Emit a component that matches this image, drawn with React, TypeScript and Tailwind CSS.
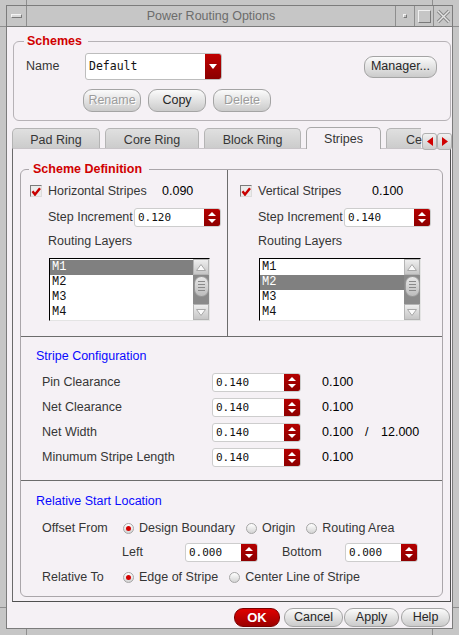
import React from 'react';

const sans = "font-['Liberation_Sans',Arial,sans-serif]";
const spinFont = "font-['DejaVu_Sans_Mono',monospace]";
const listFont = "font-['Liberation_Mono','Courier_New',monospace]";

const SpinArrows = () => (
  <div className="flex w-[16px] flex-col items-center justify-center gap-[3px] rounded-r-[2px] bg-linear-to-b from-[#b40000] to-[#8e0000]">
    <svg width="8" height="4" viewBox="0 0 8 4">
      <path d="M0 4 L4 0 L8 4Z" fill="#fff" />
    </svg>
    <svg width="8" height="4" viewBox="0 0 8 4">
      <path d="M0 0 L4 4 L8 0Z" fill="#fff" />
    </svg>
  </div>
);

const SpinBox = ({ value, width }: { value: string; width: string }) => (
  <div className={`flex h-[19px] ${width} rounded-[3px] border border-[#cdcdcd] bg-white`}>
    <div className={`flex-1 pl-[3px] ${spinFont} text-[11px] leading-[17px] text-[#111]`}>{value}</div>
    <SpinArrows />
  </div>
);

const Check = () => (
  <div className="flex h-[12px] w-[12px] items-center justify-center border border-t-[#7a7a7a] border-l-[#7a7a7a] border-b-[#dcdcdc] border-r-[#dcdcdc] bg-[#ebebeb]">
    <svg width="10" height="9" viewBox="0 0 10 9">
      <path d="M1.5 4.2 L4 7.5 L9 1.2" stroke="#c80000" strokeWidth="2.4" fill="none" />
    </svg>
  </div>
);

const Radio = ({ on }: { on?: boolean }) => (
  <div className="flex h-[11px] w-[11px] shrink-0 items-center justify-center rounded-full border border-[#a6a6a6] bg-linear-to-b from-[#ffffff] to-[#d4d4d4]">
    {on && <div className="h-[5px] w-[5px] rounded-full bg-[#d40000]" />}
  </div>
);

const ScrollBtn = ({ up }: { up?: boolean }) => (
  <div className="flex h-[16px] items-center justify-center border border-[#b4b4b4] bg-linear-to-b from-[#eeeeee] to-[#c6c6c6]">
    <svg width="10" height="7" viewBox="0 0 10 7">
      <path d={up ? 'M0.5 6.5 L5 0.5 L9.5 6.5Z' : 'M0.5 0.5 L5 6.5 L9.5 0.5Z'} fill="#fafafa" stroke="#a8a8a8" strokeWidth="1" />
    </svg>
  </div>
);

const ListBox = ({ sel, width }: { sel: number; width: string }) => (
  <div className={`flex h-[63px] ${width} border border-t-black border-l-black border-r-[#e4e4e4] border-b-[#e4e4e4] bg-white`}>
    <div className={`flex-1 pt-px ${listFont} text-[12px] leading-[15px]`}>
      {['M1', 'M2', 'M3', 'M4'].map((m, i) => (
        <div key={m} className={`h-[15px] pl-[2px] ${i === sel ? 'bg-[#808080] text-white' : 'text-[#111]'}`}>
          {m}
        </div>
      ))}
    </div>
    <div className="flex w-[16px] flex-col bg-[#8a8a8a]">
      <ScrollBtn up />
      <div className="flex h-[22px] items-center justify-center">
        <div className="flex h-[21px] w-[15px] flex-col items-center justify-center gap-[2px] rounded-full border border-[#9a9a9a] bg-linear-to-b from-[#e8e8e8] to-[#bcbcbc]">
          <div className="h-px w-[7px] bg-[#8a8a8a]" />
          <div className="h-px w-[7px] bg-[#8a8a8a]" />
          <div className="h-px w-[7px] bg-[#8a8a8a]" />
          <div className="h-px w-[7px] bg-[#8a8a8a]" />
        </div>
      </div>
      <div className="flex-1" />
      <ScrollBtn />
    </div>
  </div>
);

const GrayBtn = ({ label, width, height, disabled }: { label: string; width: string; height: string; disabled?: boolean }) => (
  <div
    className={`flex ${width} ${height} items-center justify-center rounded-[9px] border border-[#a4a4a4] bg-linear-to-b from-[#fbfbfb] to-[#cbcbcb] ${
      disabled ? 'text-[#9c9c9c] [text-shadow:1px_1px_0_#ffffff]' : 'text-[#262626]'
    }`}
  >
    {label}
  </div>
);

const Tab = ({ label, width, active }: { label: string; width: string; active?: boolean }) =>
  active ? (
    <div className={`relative z-10 -mb-px flex h-[22px] ${width} items-start justify-center rounded-t-[5px] border border-b-0 border-[#a8a8a8] bg-[#f5f1f5] pt-[2px]`}>
      {label}
    </div>
  ) : (
    <div className={`flex h-[20px] ${width} shrink-0 items-start justify-center overflow-hidden whitespace-nowrap rounded-t-[5px] border border-b-0 border-[#b4b4b4] bg-linear-to-b from-[#e0e0e0] to-[#cccccc] pt-[2px]`}>
      {label}
    </div>
  );

const TabArrow = ({ left }: { left?: boolean }) => (
  <div className="flex h-[17px] w-[15px] items-center justify-center rounded-[3px] border border-[#b0b0b0] bg-linear-to-b from-[#f2f2f2] to-[#cdcdcd]">
    <svg width="6" height="9" viewBox="0 0 6 9">
      <path d={left ? 'M6 0 L0 4.5 L6 9Z' : 'M0 0 L6 4.5 L0 9Z'} fill="#d00000" />
    </svg>
  </div>
);

const ConfigRow = ({ label, extra }: { label: string; extra?: boolean }) => (
  <div className="flex h-[19px] items-center">
    <span className="w-[170px]">{label}</span>
    <SpinBox value="0.140" width="w-[89px]" />
    <span className="ml-[21px] w-[43px] text-black">0.100</span>
    {extra && (
      <>
        <span className="w-[16px] text-black">/</span>
        <span className="text-black">12.000</span>
      </>
    )}
  </div>
);

const Opt = ({ label, on, first }: { label: string; on?: boolean; first?: boolean }) => (
  <div className={`flex items-center gap-[5px] ${first ? '' : 'ml-[11px]'}`}>
    <Radio on={on} />
    <span>{label}</span>
  </div>
);

export default function App() {
  return (
    <div className={`flex h-[635px] w-[459px] flex-col bg-[#c6c6c6] ${sans} text-[12.5px] text-[#363636]`}>
      {/* top frame */}
      <div className="flex h-[5px] shrink-0">
        <div className="w-[27px] border-r border-[#8e8e8e]" />
        <div className="flex-1" />
        <div className="w-[27px] border-l border-[#8e8e8e]" />
      </div>

      <div className="flex flex-1">
        <div className="flex w-[6px] flex-col">
          <div className="h-[22px] border-b border-[#8e8e8e]" />
          <div className="flex-1" />
          <div className="h-[22px] border-t border-[#8e8e8e]" />
        </div>

        <div className="flex w-[447px] flex-col border border-[#7c7c7c]">
          {/* title bar */}
          <div className="flex h-[21px] shrink-0 border-b border-[#7c7c7c] bg-[#c6c6c6]">
            <div className="flex w-[20px] items-center justify-center border-r border-[#8e8e8e]">
              <div className="h-[4px] w-[11px] border border-t-[#f4f4f4] border-l-[#f4f4f4] border-b-[#7a7a7a] border-r-[#7a7a7a] bg-[#d8d8d8]" />
            </div>
            <div className="flex-1 text-center leading-[20px] text-[#6c6c6c]">Power Routing Options</div>
            <div className="flex w-[19px] items-center justify-center border-l border-[#8e8e8e]">
              <div className="h-[4px] w-[4px] border border-t-[#f4f4f4] border-l-[#f4f4f4] border-b-[#7a7a7a] border-r-[#7a7a7a]" />
            </div>
            <div className="flex w-[19px] items-center justify-center border-l border-[#8e8e8e]">
              <div className="h-[13px] w-[13px] border border-t-[#f0f0f0] border-l-[#f0f0f0] border-b-[#7a7a7a] border-r-[#7a7a7a]" />
            </div>
            <div className="flex w-[19px] items-center justify-center border-l border-[#8e8e8e]">
              <svg width="15" height="15" viewBox="0 0 15 15">
                <path d="M2 2 L13 13 M13 2 L2 13" stroke="#8a8a8a" strokeWidth="3.4" />
                <path d="M2 2 L13 13 M13 2 L2 13" stroke="#e4e4e4" strokeWidth="1.4" />
              </svg>
            </div>
          </div>

          {/* body */}
          <div className="flex h-[601px] flex-col bg-[#f5f1f5]">
            {/* Schemes */}
            <div className="relative ml-[6px] mr-[1px] mt-[14px] h-[80px] rounded-[6px] border border-[#b6b2b6]">
              <span className="absolute -top-[9px] left-[10px] bg-[#f5f1f5] pl-[3px] pr-[6px] font-bold leading-[16px] text-[#d00000]">
                Schemes
              </span>
              <div className="flex items-center pl-[12px] pr-[13px] pt-[11px]">
                <span className="w-[59px]">Name</span>
                <div className="flex h-[27px] w-[137px] rounded-[3px] border border-[#bdbdbd] bg-white">
                  <div className={`flex-1 pl-[3px] ${spinFont} text-[11.5px] leading-[25px] text-[#111]`}>Default</div>
                  <div className="flex w-[16px] items-center justify-center rounded-r-[2px] bg-linear-to-b from-[#c00000] to-[#8a0000]">
                    <svg width="8" height="5" viewBox="0 0 8 5">
                      <path d="M0 0 L4 5 L8 0Z" fill="#fff" />
                    </svg>
                  </div>
                </div>
                <div className="flex-1" />
                <GrayBtn label="Manager..." width="w-[73px]" height="h-[22px]" />
              </div>
              <div className="ml-[69px] mt-[9px] flex gap-[7px]">
                <GrayBtn label="Rename" width="w-[58px]" height="h-[23px]" disabled />
                <GrayBtn label="Copy" width="w-[58px]" height="h-[23px]" />
                <GrayBtn label="Delete" width="w-[58px]" height="h-[23px]" disabled />
              </div>
            </div>

            {/* tabs */}
            <div className="relative ml-[5px] mt-[6px] flex h-[21px] items-end gap-[5px]">
              <Tab label="Pad Ring" width="w-[88px]" />
              <Tab label="Core Ring" width="w-[94px]" />
              <Tab label="Block Ring" width="w-[97px]" />
              <Tab label="Stripes" width="w-[75px]" active />
              <div className="flex h-[20px] w-[35px] shrink-0 whitespace-nowrap rounded-tl-[5px] border border-b-0 border-r-0 border-[#b4b4b4] bg-linear-to-b from-[#e0e0e0] to-[#cccccc] pl-[19px] pt-[2px]">
                Ce
              </div>
              <div className="absolute right-0 top-[6px] z-20 flex">
                <TabArrow left />
                <TabArrow />
              </div>
            </div>

            {/* tab panel */}
            <div className="ml-[5px] mr-[1px] flex flex-col border border-t-[#c8c4c8] border-l-[#6a6a6a] border-r-[#505050] border-b-[#505050]">
              <div className="relative mx-[7px] mb-[4px] mt-[20px] flex h-[428px] flex-col rounded-[6px] border border-[#aaa6aa]">
                <span className="absolute -top-[9px] left-[8px] z-10 bg-[#f5f1f5] pl-[4px] pr-[7px] font-bold leading-[16px] text-[#d00000]">
                  Scheme Definition
                </span>

                {/* definition columns */}
                <div className="flex h-[167px] shrink-0 border-b border-[#6c6c6c]">
                  <div className="w-[207px] border-r border-[#6c6c6c] pt-[13px]">
                    <div className="flex h-[16px] items-center pl-[9px]">
                      <Check />
                      <span className="ml-[6px] w-[114px]">Horizontal Stripes</span>
                      <span className="text-black">0.090</span>
                    </div>
                    <div className="mt-[9px] flex items-center pl-[27px]">
                      <span className="w-[86px]">Step Increment</span>
                      <SpinBox value="0.120" width="w-[87px]" />
                    </div>
                    <div className="mt-[7px] h-[15px] pl-[27px] leading-[15px]">Routing Layers</div>
                    <div className="mt-[9px] pl-[28px]">
                      <ListBox sel={0} width="w-[161px]" />
                    </div>
                  </div>
                  <div className="flex-1 pt-[13px]">
                    <div className="flex h-[16px] items-center pl-[12px]">
                      <Check />
                      <span className="ml-[6px] w-[114px]">Vertical Stripes</span>
                      <span className="text-black">0.100</span>
                    </div>
                    <div className="mt-[9px] flex items-center pl-[30px]">
                      <span className="w-[86px]">Step Increment</span>
                      <SpinBox value="0.140" width="w-[87px]" />
                    </div>
                    <div className="mt-[7px] h-[15px] pl-[30px] leading-[15px]">Routing Layers</div>
                    <div className="mt-[9px] pl-[31px]">
                      <ListBox sel={1} width="w-[162px]" />
                    </div>
                  </div>
                </div>

                {/* stripe configuration */}
                <div className="flex h-[144px] shrink-0 flex-col border-b border-[#6c6c6c] pl-[15px] pt-[12px]">
                  <div className="h-[15px] leading-[15px] text-[#0a0aff]">Stripe Configuration</div>
                  <div className="mt-[9px] flex flex-col gap-[6px] pl-[6px]">
                    <ConfigRow label="Pin Clearance" />
                    <ConfigRow label="Net Clearance" />
                    <ConfigRow label="Net Width" extra />
                    <ConfigRow label="Minumum Stripe Length" />
                  </div>
                </div>

                {/* relative start location */}
                <div className="flex flex-1 flex-col pl-[15px] pt-[13px]">
                  <div className="h-[15px] leading-[15px] text-[#0a0aff]">Relative Start Location</div>
                  <div className="mt-[11px] flex h-[16px] items-center pl-[6px]">
                    <span className="w-[81px]">Offset From</span>
                    <Opt label="Design Boundary" on first />
                    <Opt label="Origin" />
                    <Opt label="Routing Area" />
                  </div>
                  <div className="mt-[7px] flex h-[19px] items-center pl-[86px]">
                    <span className="w-[63px]">Left</span>
                    <SpinBox value="0.000" width="w-[73px]" />
                    <span className="ml-[24px] w-[63px]">Bottom</span>
                    <SpinBox value="0.000" width="w-[73px]" />
                  </div>
                  <div className="mt-[7px] flex h-[16px] items-center pl-[6px]">
                    <span className="w-[81px]">Relative To</span>
                    <Opt label="Edge of Stripe" on first />
                    <Opt label="Center Line of Stripe" />
                  </div>
                </div>
              </div>
            </div>

            {/* dialog buttons */}
            <div className="mt-[6px] flex h-[19px] justify-end pr-[2px]">
              <div className="flex w-[46px] items-center justify-center rounded-[9px] border border-[#7a0000] bg-linear-to-b from-[#e00000] to-[#9c0000] text-[13px] font-bold text-white">
                OK
              </div>
              <div className="ml-[4px]">
                <GrayBtn label="Cancel" width="w-[59px]" height="h-[19px]" />
              </div>
              <div className="ml-[1px]">
                <GrayBtn label="Apply" width="w-[55px]" height="h-[19px]" />
              </div>
              <div className="ml-[2px]">
                <GrayBtn label="Help" width="w-[49px]" height="h-[19px]" />
              </div>
            </div>
          </div>
        </div>

        <div className="flex w-[6px] flex-col">
          <div className="h-[22px] border-b border-[#8e8e8e]" />
          <div className="flex-1" />
          <div className="h-[22px] border-t border-[#8e8e8e]" />
        </div>
      </div>

      {/* bottom frame */}
      <div className="flex h-[6px] shrink-0">
        <div className="w-[27px] border-r border-[#8e8e8e]" />
        <div className="flex-1" />
        <div className="w-[27px] border-l border-[#8e8e8e]" />
      </div>
    </div>
  );
}
